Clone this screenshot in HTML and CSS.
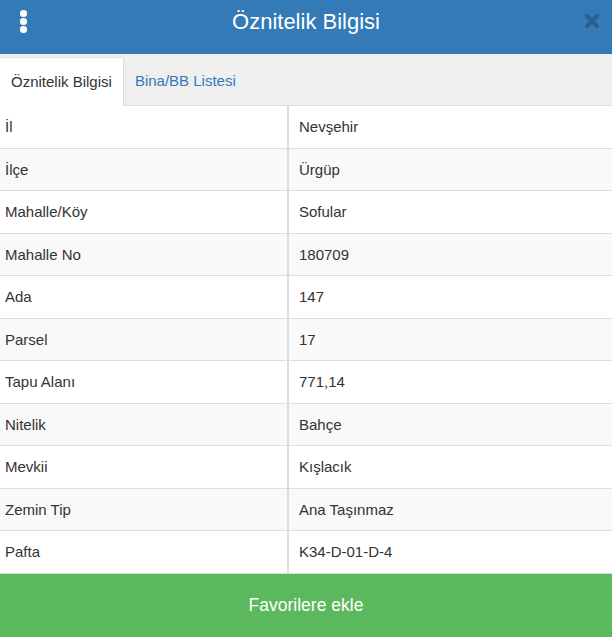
FILE: index.html
```html
<!DOCTYPE html>
<html lang="tr">
<head>
    <meta charset="UTF-8">
    <meta name="viewport" content="width=device-width, initial-scale=1.0">
    <title>Öznitelik Bilgisi</title>
    <link rel="stylesheet" href="styles.css">
</head>
<body>
    <div class="panel">
        <div class="panel-header">
            <span class="menu-dots"><i></i><i></i><i></i></span>
            <h1>Öznitelik Bilgisi</h1>
            <svg class="close-btn" width="16" height="16" viewBox="0 0 16 16">
                <path d="M3 3 L13 13 M13 3 L3 13" stroke="currentColor" stroke-width="4" stroke-linecap="round"/>
            </svg>
        </div>

        <ul class="tabs">
            <li class="tab active">Öznitelik Bilgisi</li>
            <li class="tab">Bina/BB Listesi</li>
        </ul>

        <table class="attr-table">
            <colgroup><col class="col-key"><col></colgroup>
            <tr><td>İl</td><td>Nevşehir</td></tr>
            <tr><td>İlçe</td><td>Ürgüp</td></tr>
            <tr><td>Mahalle/Köy</td><td>Sofular</td></tr>
            <tr><td>Mahalle No</td><td>180709</td></tr>
            <tr><td>Ada</td><td>147</td></tr>
            <tr><td>Parsel</td><td>17</td></tr>
            <tr><td>Tapu Alanı</td><td>771,14</td></tr>
            <tr><td>Nitelik</td><td>Bahçe</td></tr>
            <tr><td>Mevkii</td><td>Kışlacık</td></tr>
            <tr><td>Zemin Tip</td><td>Ana Taşınmaz</td></tr>
            <tr><td>Pafta</td><td>K34-D-01-D-4</td></tr>
        </table>

        <button class="fav-button">Favorilere ekle</button>
    </div>
</body>
</html>
```

FILE: styles.css
```css
body {
    margin: 0;
    font-family: "Liberation Sans", Arial, sans-serif;
    background-color: #2b2b2b;
    color: #333;
}
.panel {
    width: 612px;
    background-color: white;
}
.panel-header {
    height: 54px;
    background-color: #337ab7;
    display: flex;
    align-items: center;
    justify-content: center;
    position: relative;
}
.panel-header h1 {
    margin: 0;
    color: white;
    font-size: 22px;
    font-weight: normal;
    padding-bottom: 10px;
}
.menu-dots {
    position: absolute;
    left: 20px;
    top: 10px;
    display: flex;
    flex-direction: column;
    gap: 1.5px;
}
.menu-dots i {
    display: block;
    width: 6.5px;
    height: 6.5px;
    border-radius: 50%;
    background-color: white;
}
.close-btn {
    position: absolute;
    right: 12px;
    top: 13px;
    color: #285f90;
}
.tabs {
    list-style: none;
    margin: 0;
    padding: 3px 0 0;
    height: 48px;
    display: flex;
    background-color: #efefef;
    border-bottom: 1px solid #dedede;
}
.tab {
    font-size: 15px;
    line-height: 47px;
    padding: 0 14px 0 11px;
    color: #337ab7;
}
.tab.active {
    color: #333;
    background-color: white;
    border-right: 1px solid #ddd;
    border-top: 1px solid #e4e4e4;
    margin-bottom: -1px;
    height: 48px;
    padding-right: 11px;
}
.attr-table {
    width: 612px;
    table-layout: fixed;
    border-collapse: collapse;
    font-size: 15px;
}
.col-key {
    width: 288px;
}
.attr-table td {
    padding: 11px 10px 11.5px 10px;
    line-height: 19px;
    border-bottom: 1px solid #ddd;
}
.attr-table td:first-child {
    padding-left: 5px;
    border-right: 2px solid #ddd;
}
.attr-table tr:nth-child(even) {
    background-color: #f9f9f9;
}
.fav-button {
    display: block;
    width: 100%;
    height: 63px;
    border: none;
    background-color: #5cb85c;
    color: white;
    font-family: inherit;
    font-size: 17.5px;
    cursor: pointer;
}
```
